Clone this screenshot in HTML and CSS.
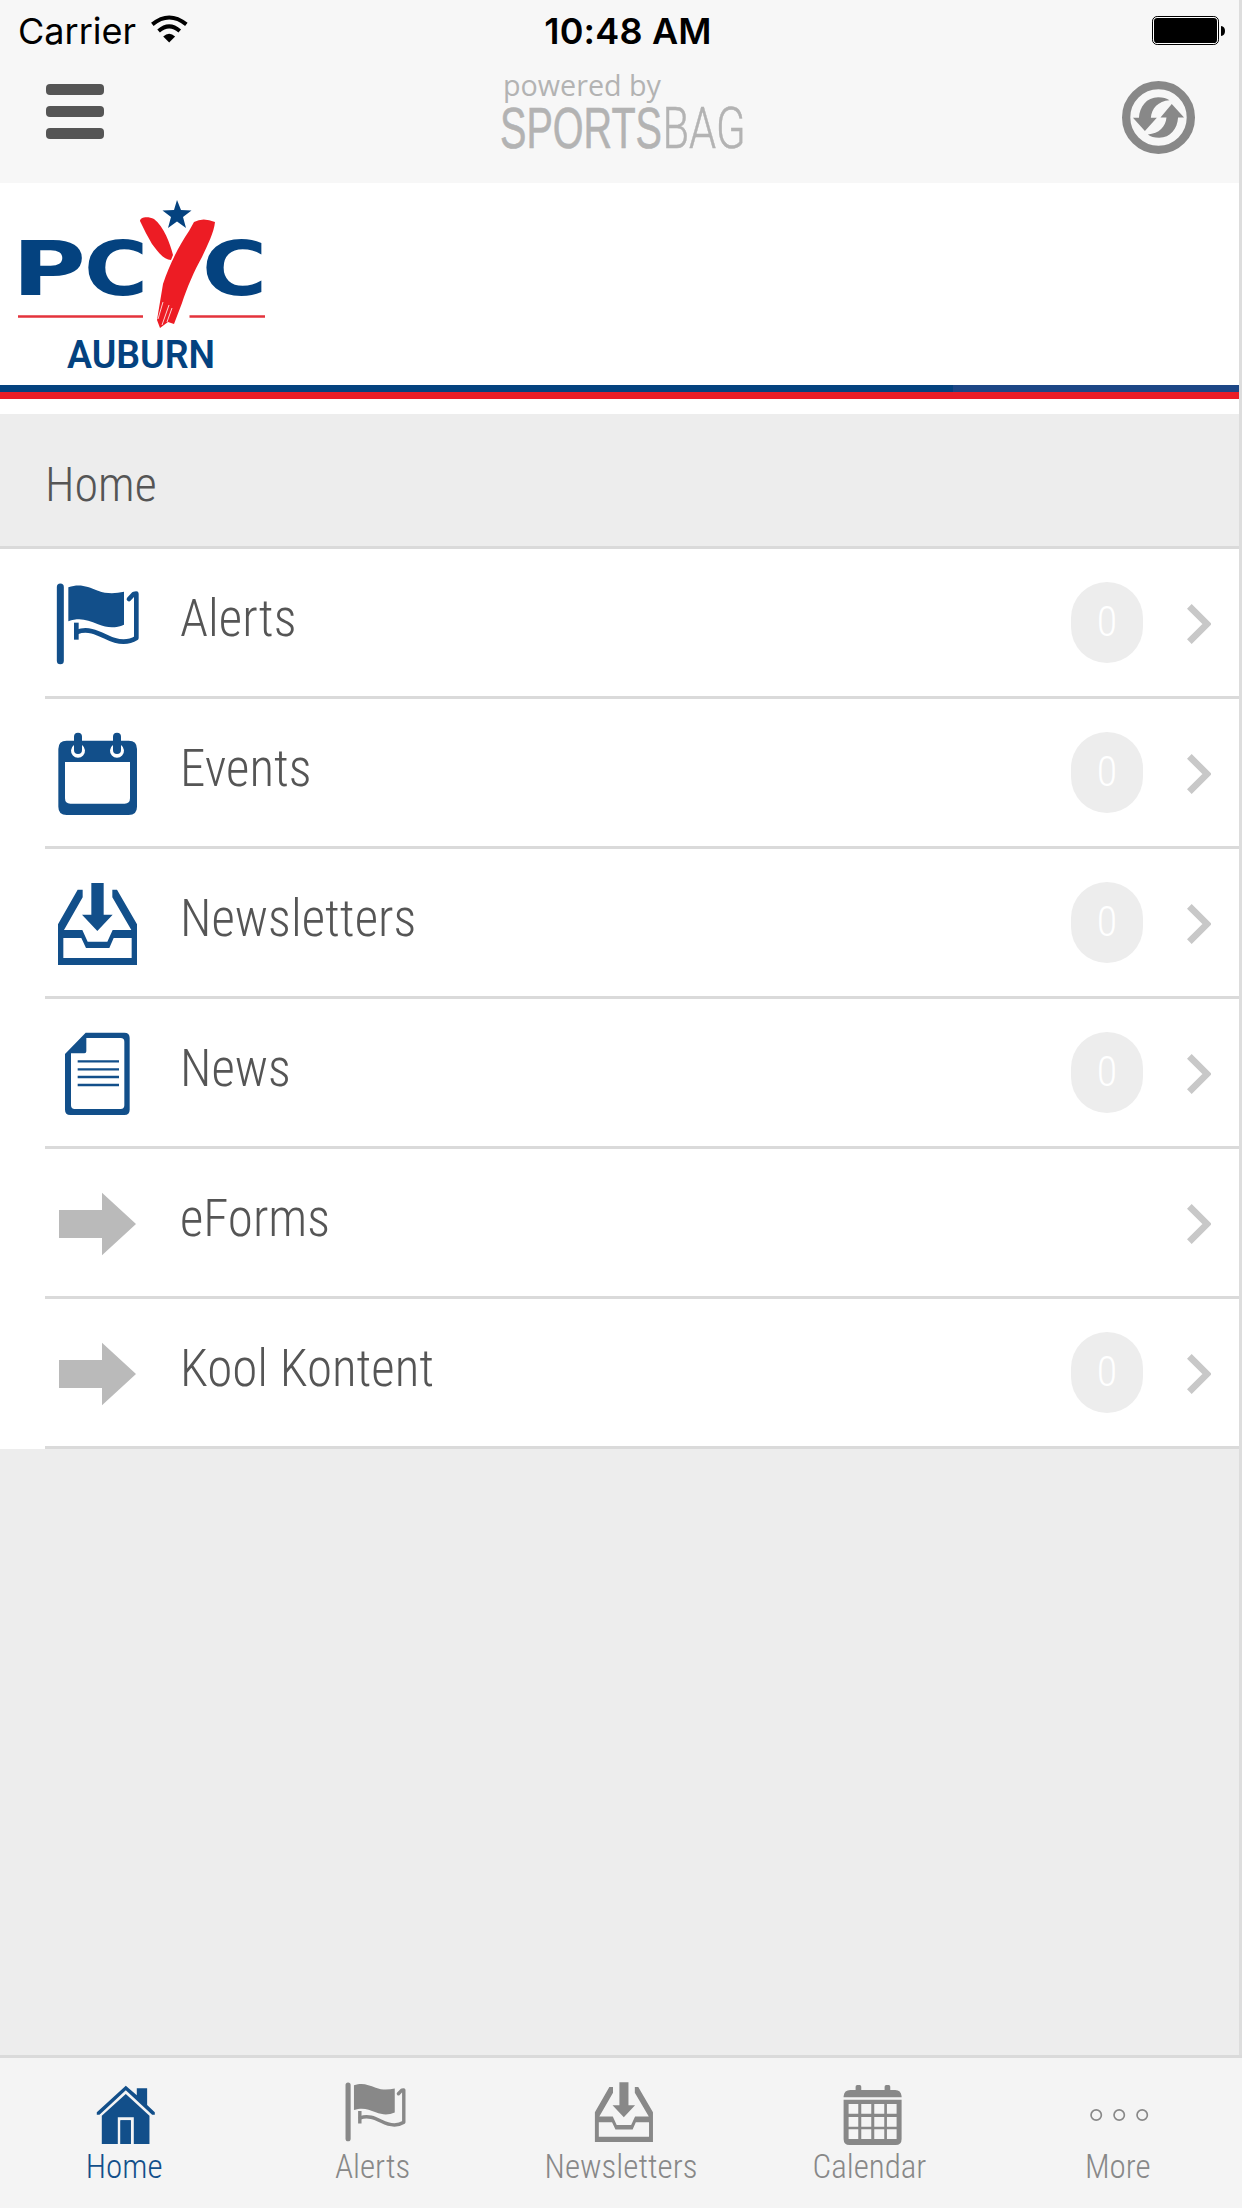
FILE: index.html
```html
<!DOCTYPE html>
<html lang="en">
<head>
<meta charset="utf-8">
<title>PCYC Auburn</title>
<link rel="stylesheet" href="styles.css">
</head>
<body>
<svg class="defs" aria-hidden="true">
  <symbol id="flag" viewBox="168 546 252 252">
    <path d="M181 561V782" stroke="currentColor" stroke-width="21" stroke-linecap="round"/>
    <path d="M205 562C240 550 262 560 294 572C320 582 346 581 372 575V674C346 685 322 684 294 673C262 660 240 652 205 664Z" fill="currentColor"/>
    <path d="M229 668V719" stroke="currentColor" stroke-width="14"/>
    <path d="M231 696C262 684 290 697 317 710C350 727 382 731 409 714V581L401 582L387 597" fill="none" stroke="currentColor" stroke-width="14" stroke-linecap="round" stroke-linejoin="round"/>
  </symbol>
  <symbol id="inbox" viewBox="168 546 252 252">
    <path d="M274 549H311V644H338L292 693L246 644H274Z" fill="currentColor"/>
    <path d="M233 569H248V592L192 690H247L263 725H322L338 690H394L337 592V569H351L411 673V795H174V673ZM190 714V774H395V714H341L328 744H258L244 714Z" fill="currentColor" fill-rule="evenodd"/>
  </symbol>
  <symbol id="arrow" viewBox="168 546 252 252">
    <path d="M177 630H306V578L408 672L306 766V714H177Z" fill="currentColor"/>
  </symbol>
  <symbol id="chevron" viewBox="0 0 72 120">
    <path d="M7 7L60 60L7 113" fill="none" stroke="currentColor" stroke-width="20"/>
  </symbol>
</svg>

<div class="screen">
  <div class="view">
    <header class="top">
      <div class="status">
        <div class="carrier"><span>Carrier</span>
          <svg class="wifi" viewBox="450 46 112 84"><path d="M505 129L487 111Q505 94 523 111Z"/><path d="M473 94Q505 66 537 94M454 74Q505 32 557 74" fill="none" stroke="#000" stroke-width="12"/></svg>
        </div>
        <div class="clock">10:48 AM</div>
        <svg class="battery" viewBox="456 48 219 87"><rect x="457.5" y="49.5" width="198" height="84" rx="14" fill="#fff" stroke="#000" stroke-width="3"/><rect x="462" y="54" width="189" height="75" rx="10"/><path d="M663 78Q675 80 675 93Q675 106 663 108Z"/></svg>
      </div>
      <div class="navbar">
        <div class="menu"><i></i><i></i><i></i></div>
        <svg class="brand" viewBox="0 0 246 80">
          <text class="powered" x="3" y="28" textLength="158" lengthAdjust="spacingAndGlyphs">powered by</text>
          <text class="sports" x="0" y="79.500" textLength="162" lengthAdjust="spacingAndGlyphs">SPORTS</text>
          <text class="bag" x="162.500" y="79.500" textLength="83" lengthAdjust="spacingAndGlyphs">BAG</text>
        </svg>
        <svg class="refresh" viewBox="366 242 220 220"><circle cx="476" cy="352" r="97.5" fill="none" stroke="currentColor" stroke-width="25"/><path d="M399 353H417C419 320 440 291 475 291Q497 291 509 300C475 302 455 325 453 353H471L435 393ZM516 311L553 352H535C533 386 512 413 478 413Q456 413 444 403C478 401 498 379 500 352H482Z" fill="currentColor"/></svg>
      </div>
    </header>

    <div class="banner">
      <svg class="logo" viewBox="0 0 270 202">
        <g class="letters">
          <text x="12" y="111.500" textLength="74" lengthAdjust="spacingAndGlyphs">P</text>
          <text x="84" y="111.500" textLength="64" lengthAdjust="spacingAndGlyphs">C</text>
          <text x="202" y="111.500" textLength="65" lengthAdjust="spacingAndGlyphs">C</text>
        </g>
        <path class="red" d="M140 38C140 34 148 33 154 36C164 44 170 60 173 72L171 77C164 77 158 69 152 61Q146 51 140 38ZM194 39Q203 34 215 39C214 50 207 63 202 74C194 88 187 105 182 120L174 141L168 139L160 145L157 137L163 101C169 83 178 64 189 48Z"/>
        <path d="M163 119L158 136M169 122L162 142M172 125L167 139" stroke="#fff" stroke-width=".8"/>
        <path class="blue" d="M177 17L181 27L191.500 27.500L183 34L186 45L177 38.500L168 45L171 34L162.500 27.500L174 27Z"/>
        <path d="M18 133.500H143M189.500 133.500H265" stroke="#e4333c" stroke-width="2.7"/>
        <text class="club" x="67" y="184.500" textLength="148" lengthAdjust="spacingAndGlyphs">AUBURN</text>
      </svg>
      <div class="stripes"></div>
    </div>

    <h1 class="title">Home</h1>

    <ul class="list">
      <li class="row"><svg class="icon"><use href="#flag"/></svg><span class="label">Alerts</span><span class="badge">0</span><svg class="chev"><use href="#chevron"/></svg></li>
      <li class="row"><svg class="icon" viewBox="168 96 252 252">
        <path d="M200 122H386Q411 122 411 147V320Q411 345 386 345H200Q175 345 175 320V147Q175 122 200 122ZM195 186V295Q195 311 211 311H374Q390 311 390 295V186Z" fill="currentColor" fill-rule="evenodd"/>
        <path d="M221 136A21 21 0 1 0 247 136ZM338 136A21 21 0 1 0 364 136Z" fill="#fff"/>
        <path d="M234 110V150M351 110V150" stroke="currentColor" stroke-width="24" stroke-linecap="round"/>
      </svg><span class="label">Events</span><span class="badge">0</span><svg class="chev"><use href="#chevron"/></svg></li>
      <li class="row"><svg class="icon"><use href="#inbox"/></svg><span class="label">Newsletters</span><span class="badge">0</span><svg class="chev"><use href="#chevron"/></svg></li>
      <li class="row"><svg class="icon" viewBox="168 96 252 252">
        <path d="M257 98H373Q389 98 389 114V329Q389 345 373 345H211Q195 345 195 329V162ZM259 114V154Q259 160 253 160H213V316Q213 327 224 327H362Q373 327 373 316V125Q373 114 362 114Z" fill="currentColor" fill-rule="evenodd"/>
        <path d="M233 184H357M233 208H357M233 231H357M233 255H357" stroke="currentColor" stroke-width="7"/>
      </svg><span class="label">News</span><span class="badge">0</span><svg class="chev"><use href="#chevron"/></svg></li>
      <li class="row"><svg class="icon plain"><use href="#arrow"/></svg><span class="label">eForms</span><svg class="chev"><use href="#chevron"/></svg></li>
      <li class="row"><svg class="icon plain"><use href="#arrow"/></svg><span class="label">Kool Kontent</span><span class="badge">0</span><svg class="chev"><use href="#chevron"/></svg></li>
    </ul>
  </div>

  <nav class="tabs">
    <div class="tab active"><svg viewBox="264.600 114 216 204">
      <path d="M378 137L411 166V145H442V195L465 217V224H457L378 151L299 224H291V217Z" fill="currentColor"/>
      <path d="M378 162L449 227V312H402V232H354V312H306V227ZM362 241H393V312H362Z" fill="currentColor"/>
      <path d="M362 241H393V312H362Z" fill="currentColor"/>
    </svg><span>Home</span></div>
    <div class="tab"><svg viewBox="1009.800 114 216 204"><use href="#flag" x="168" y="546" width="252" height="252" transform="translate(910.400 -274.500) scale(.733 .730)"/></svg><span>Alerts</span></div>
    <div class="tab"><svg viewBox="255 114 216 204"><use href="#inbox" x="168" y="546" width="252" height="252" transform="translate(156.800 -273) scale(.735 .728)"/></svg><span>Newsletters</span></div>
    <div class="tab"><svg viewBox="1000.200 114 216 204">
      <path d="M1032 172V169Q1034 150 1052 150H1068V140Q1068 135 1073 135H1080Q1085 135 1085 140V150H1155V140Q1155 135 1160 135H1167Q1172 135 1172 140V150H1187Q1204 150 1206 169V172Z" fill="currentColor"/>
      <path d="M1032 179H1206V297Q1206 315 1188 315H1050Q1032 315 1032 297ZM1047 192V221H1076V192ZM1085 192V221H1115V192ZM1124 192V221H1154V192ZM1162 192V221H1191V192ZM1047 231V260H1076V231ZM1085 231V260H1115V231ZM1124 231V260H1154V231ZM1162 231V260H1191V231ZM1047 268V297H1076V268ZM1085 268V297H1115V268ZM1124 268V297H1154V268ZM1162 268V297H1191V268Z" fill="currentColor" fill-rule="evenodd"/>
    </svg><span>Calendar</span></div>
    <div class="tab"><svg viewBox="365.400 114 216 204"><g fill="none" stroke="currentColor" stroke-width="5"><circle cx="408" cy="225" r="15.500"/><circle cx="477" cy="225" r="15.500"/><circle cx="546" cy="225" r="15.500"/></g></svg><span>More</span></div>
  </nav>
</div>
</body>
</html>
```

FILE: styles.css
```css
* { box-sizing: border-box; }
body {
  margin: 0;
  background: #ededed;
  color: #555;
  font-family: "Roboto Condensed", Roboto, "Liberation Sans", sans-serif;
  font-stretch: 75%;
  font-weight: 300;
}
svg { display: block; flex: none; }
.defs { display: none; }
.screen { display: flex; flex-direction: column; width: 1242px; height: 2208px; overflow: hidden; }
.view { flex: 1; border-right: 3px solid #ddd; background: #ededed; }

.top { height: 183px; background: #f7f7f7; }
.status {
  display: grid;
  grid-template-columns: 1fr auto 1fr;
  height: 62px;
  padding: 0 14px 0 18px;
  color: #000;
  font-family: Inter, "Liberation Sans", sans-serif;
  font-size: 36px;
  font-stretch: 100%;
  font-weight: 400;
  line-height: 62px;
}
.carrier { display: flex; }
.wifi { width: 37px; height: 28px; margin: 15px 0 0 15px; }
.clock { padding-left: 13px; font-weight: 600; letter-spacing: .2px; }
.battery { width: 73px; height: 29px; margin: 16px 0 0; justify-self: end; }
.navbar {
  display: grid;
  grid-template-columns: 1fr auto 1fr;
  height: 121px;
  padding: 0 44px 0 46px;
}
.menu { display: flex; flex-direction: column; gap: 11px; padding-top: 22px; }
.menu i { width: 58px; height: 11px; border-radius: 4px; background: #555; }
.brand { width: 246px; height: 80px; margin: 6px 0 0 4px; overflow: visible; fill: #b3b3b3; font-stretch: 100%; }
.powered { font: 400 30px "Open Sans", sans-serif; }
.sports { font: 400 58px "Liberation Sans", sans-serif; stroke: #b3b3b3; stroke-width: .6; }
.bag { font: 300 57px Roboto, sans-serif; stroke: #b3b3b3; stroke-width: .5; }
.refresh { width: 73px; height: 73px; margin-top: 19px; justify-self: end; color: #888; }

.banner { height: 231px; background: #fff; }
.logo { width: 270px; height: 202px; }
.letters { fill: #04427f; font: 700 74px "DejaVu Sans", sans-serif; }
.club { fill: #04427f; font: 600 38px Roboto, sans-serif; }
.red { fill: #ed1c24; }
.blue { fill: #04427f; }
.stripes {
  height: 14px;
  border-bottom: 7px solid #ea1d27;
  background: linear-gradient(90deg, #04427f 953px, #1d4786 953px);
}

.title {
  height: 135px;
  margin: 0;
  padding: 9px 0 0 45px;
  border-bottom: 3px solid #dadada;
  font-size: 48px;
  font-weight: 300;
  line-height: 123px;
}

.list { margin: 0; padding: 0; list-style: none; background: #fff; }
.row {
  display: flex;
  align-items: flex-start;
  height: 150px;
  padding: 0 28px 0 56px;
  background: linear-gradient(#dadada, #dadada) 45px 147px / 100% 3px no-repeat;
}
.row:last-child { background-color: #fff; }
.icon { width: 84px; height: 84px; margin-top: 33px; color: #124f8a; }
.icon.plain { color: #bababa; }
.label { flex: 1; padding-left: 40px; font-size: 51px; line-height: 140px; }
.badge {
  width: 72px;
  height: 81px;
  margin-top: 33px;
  border-radius: 36px;
  background: #ededed;
  color: #fff;
  font-size: 42px;
  line-height: 80px;
  text-align: center;
}
.chev { width: 24px; height: 40px; margin: 55px 0 0 44px; color: #c8c8c8; }

.tabs {
  display: grid;
  grid-template-columns: repeat(5, 1fr);
  height: 153px;
  border-top: 3px solid #dadada;
  background: #f4f4f4;
  color: #888;
}
.tab { display: flex; flex-direction: column; align-items: center; padding-top: 20px; font-size: 33px; line-height: 41px; }
.tab svg { width: 72px; height: 68px; }
.tab.active { color: #124f8a; }
```
